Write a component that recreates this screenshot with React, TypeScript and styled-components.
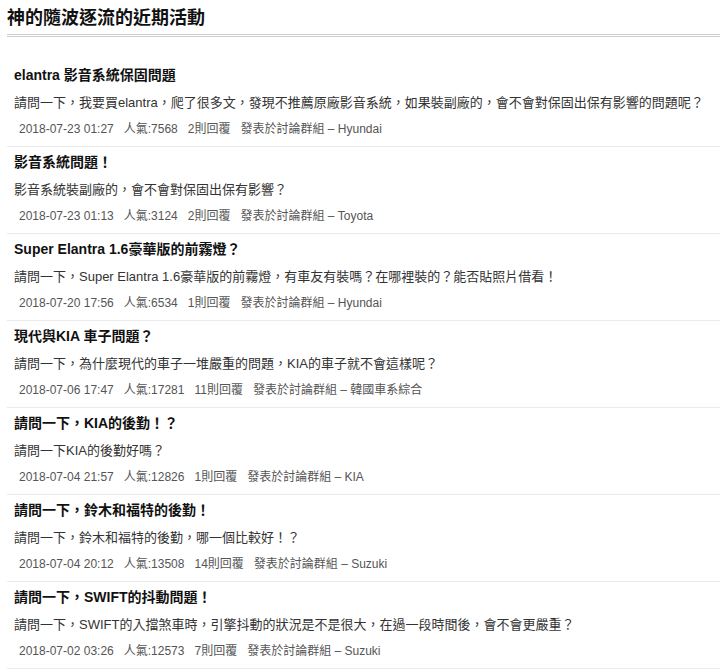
import styled, { createGlobalStyle } from "styled-components";

const GlobalStyle = createGlobalStyle`
	body {
		margin: 0;
		background: #fff;
		font-family: "Liberation Sans", "Noto Sans CJK TC", sans-serif;
		color: #222;
	}
`;

const Page = styled.div`
	padding-left: 7px;
`;

const Header = styled.h2`
	margin: 0;
	padding-top: 6px;
	padding-bottom: 4px;
	font-size: 18px;
	line-height: 24px;
	font-weight: bold;
	color: #111;
	border-bottom: 3px double #cfcfcf;
`;

const List = styled.ul`
	list-style: none;
	margin: 0;
	padding: 23px 0 0;
`;

const Item = styled.li`
	display: flex;
	flex-direction: column;
	padding: 5px 0 7px 7px;
	border-bottom: 1px solid #ebebeb;
`;

const Title = styled.a`
	font-size: 14px;
	line-height: 20px;
	font-weight: bold;
	color: #111;
	text-decoration: none;
	margin-bottom: 8px;
`;

const Desc = styled.p`
	margin: 0 0 6px;
	font-size: 13px;
	line-height: 20px;
	color: #333;
`;

const Meta = styled.div`
	display: flex;
	gap: 10px;
	padding-left: 5px;
	font-size: 12px;
	line-height: 20px;
	color: #555;
`;

interface Post {
	title: string;
	desc: string;
	date: string;
	views: number;
	replies: number;
	group: string;
}

const posts: Post[] = [
	{
		title: "elantra 影音系統保固問題",
		desc: "請問一下，我要買elantra，爬了很多文，發現不推薦原廠影音系統，如果裝副廠的，會不會對保固出保有影響的問題呢？",
		date: "2018-07-23 01:27",
		views: 7568,
		replies: 2,
		group: "Hyundai",
	},
	{
		title: "影音系統問題！",
		desc: "影音系統裝副廠的，會不會對保固出保有影響？",
		date: "2018-07-23 01:13",
		views: 3124,
		replies: 2,
		group: "Toyota",
	},
	{
		title: "Super Elantra 1.6豪華版的前霧燈？",
		desc: "請問一下，Super Elantra 1.6豪華版的前霧燈，有車友有裝嗎？在哪裡裝的？能否貼照片借看！",
		date: "2018-07-20 17:56",
		views: 6534,
		replies: 1,
		group: "Hyundai",
	},
	{
		title: "現代與KIA 車子問題？",
		desc: "請問一下，為什麼現代的車子一堆嚴重的問題，KIA的車子就不會這樣呢？",
		date: "2018-07-06 17:47",
		views: 17281,
		replies: 11,
		group: "韓國車系綜合",
	},
	{
		title: "請問一下，KIA的後勤！？",
		desc: "請問一下KIA的後勤好嗎？",
		date: "2018-07-04 21:57",
		views: 12826,
		replies: 1,
		group: "KIA",
	},
	{
		title: "請問一下，鈴木和福特的後勤！",
		desc: "請問一下，鈴木和福特的後勤，哪一個比較好！？",
		date: "2018-07-04 20:12",
		views: 13508,
		replies: 14,
		group: "Suzuki",
	},
	{
		title: "請問一下，SWIFT的抖動問題！",
		desc: "請問一下，SWIFT的入擋煞車時，引擎抖動的狀況是不是很大，在過一段時間後，會不會更嚴重？",
		date: "2018-07-02 03:26",
		views: 12573,
		replies: 7,
		group: "Suzuki",
	},
];

export default function App() {
	return (
		<Page>
			<GlobalStyle />
			<Header>神的隨波逐流的近期活動</Header>
			<List>
				{posts.map((p) => (
					<Item key={p.date}>
						<Title href='#'>{p.title}</Title>
						<Desc>{p.desc}</Desc>
						<Meta>
							<span>{p.date}</span>
							<span>人氣:{p.views}</span>
							<span>{p.replies}則回覆</span>
							<span>發表於討論群組 – {p.group}</span>
						</Meta>
					</Item>
				))}
			</List>
		</Page>
	);
}
